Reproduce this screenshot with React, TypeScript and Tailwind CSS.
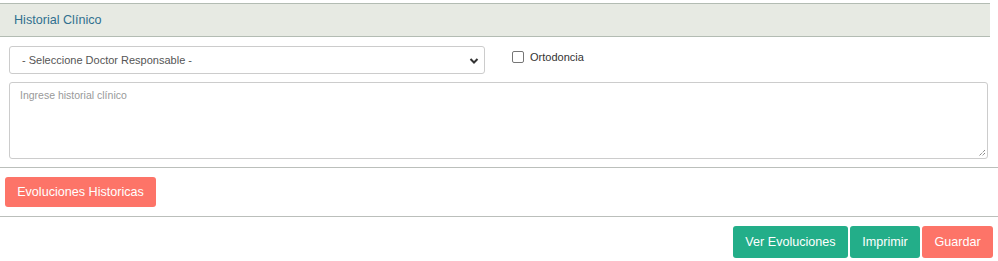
import React from 'react';

const font = { fontFamily: '"Liberation Sans", Arial, sans-serif' };

export default function App() {
  return (
    <div className="w-[998px] h-[261px] bg-white text-[#333]" style={font}>
      <div className="pt-[3px] w-[990px]">
        <div className="h-[34px] bg-[#e7eae3] border-y border-[#b3bcb3] flex items-center pl-[14px]">
          <span className="text-[12.6px] text-[#31708f]">Historial Clínico</span>
        </div>
      </div>

      <div className="flex items-start pl-[9px] pt-[9px]">
        <div className="relative w-[476px] h-[28px] border border-[#ccc] rounded-[3px] bg-white flex items-center pl-[12px]">
          <span className="text-[11px] text-[#555]">- Seleccione Doctor Responsable -</span>
          <svg className="absolute right-[5px] top-[10px]" width="10" height="8" viewBox="0 0 10 8">
            <path d="M1.5 2 L5 5.5 L8.5 2" fill="none" stroke="#333" strokeWidth="2" />
          </svg>
        </div>
        <label className="flex items-center ml-[27px] mt-[3px] text-[11px] text-[#333]">
          <span className="w-[12px] h-[12px] border border-[#767676] rounded-[2px] bg-white mr-[6px]" />
          Ortodoncia
        </label>
      </div>

      <div className="pl-[9px] pr-[10px] pt-[8px]">
        <div className="relative h-[77px] border border-[#ccc] rounded-[3px] bg-white pl-[10px] pt-[5px] text-[10.5px] leading-[15px]">
          <span className="text-[#999]">Ingrese historial clínico</span>
          <svg className="absolute right-[1px] bottom-[1px]" width="9" height="9" viewBox="0 0 9 9">
            <path d="M8 2 L2 8 M8 5 L5 8" stroke="#555" strokeWidth="1" strokeDasharray="1 1" />
          </svg>
        </div>
      </div>

      <div className="mt-[8px] border-t border-[#bbbfbb]" />

      <div className="pl-[5px] pt-[9px] pb-[9px]">
        <button className="w-[151px] h-[30px] rounded-[3px] bg-[#fd7468] text-white text-[12.6px]">
          Evoluciones Historicas
        </button>
      </div>

      <div className="border-t border-[#bbbfbb]" />

      <div className="flex justify-end gap-[2px] pr-[5px] pt-[9px]">
        <button className="w-[115px] h-[32px] rounded-[3px] bg-[#23ae89] text-white text-[12.6px]">
          Ver Evoluciones
        </button>
        <button className="w-[70px] h-[32px] rounded-[3px] bg-[#23ae89] text-white text-[12.6px]">
          Imprimir
        </button>
        <button className="w-[71px] h-[32px] rounded-[3px] bg-[#fd7468] text-white text-[12.6px]">
          Guardar
        </button>
      </div>
    </div>
  );
}
